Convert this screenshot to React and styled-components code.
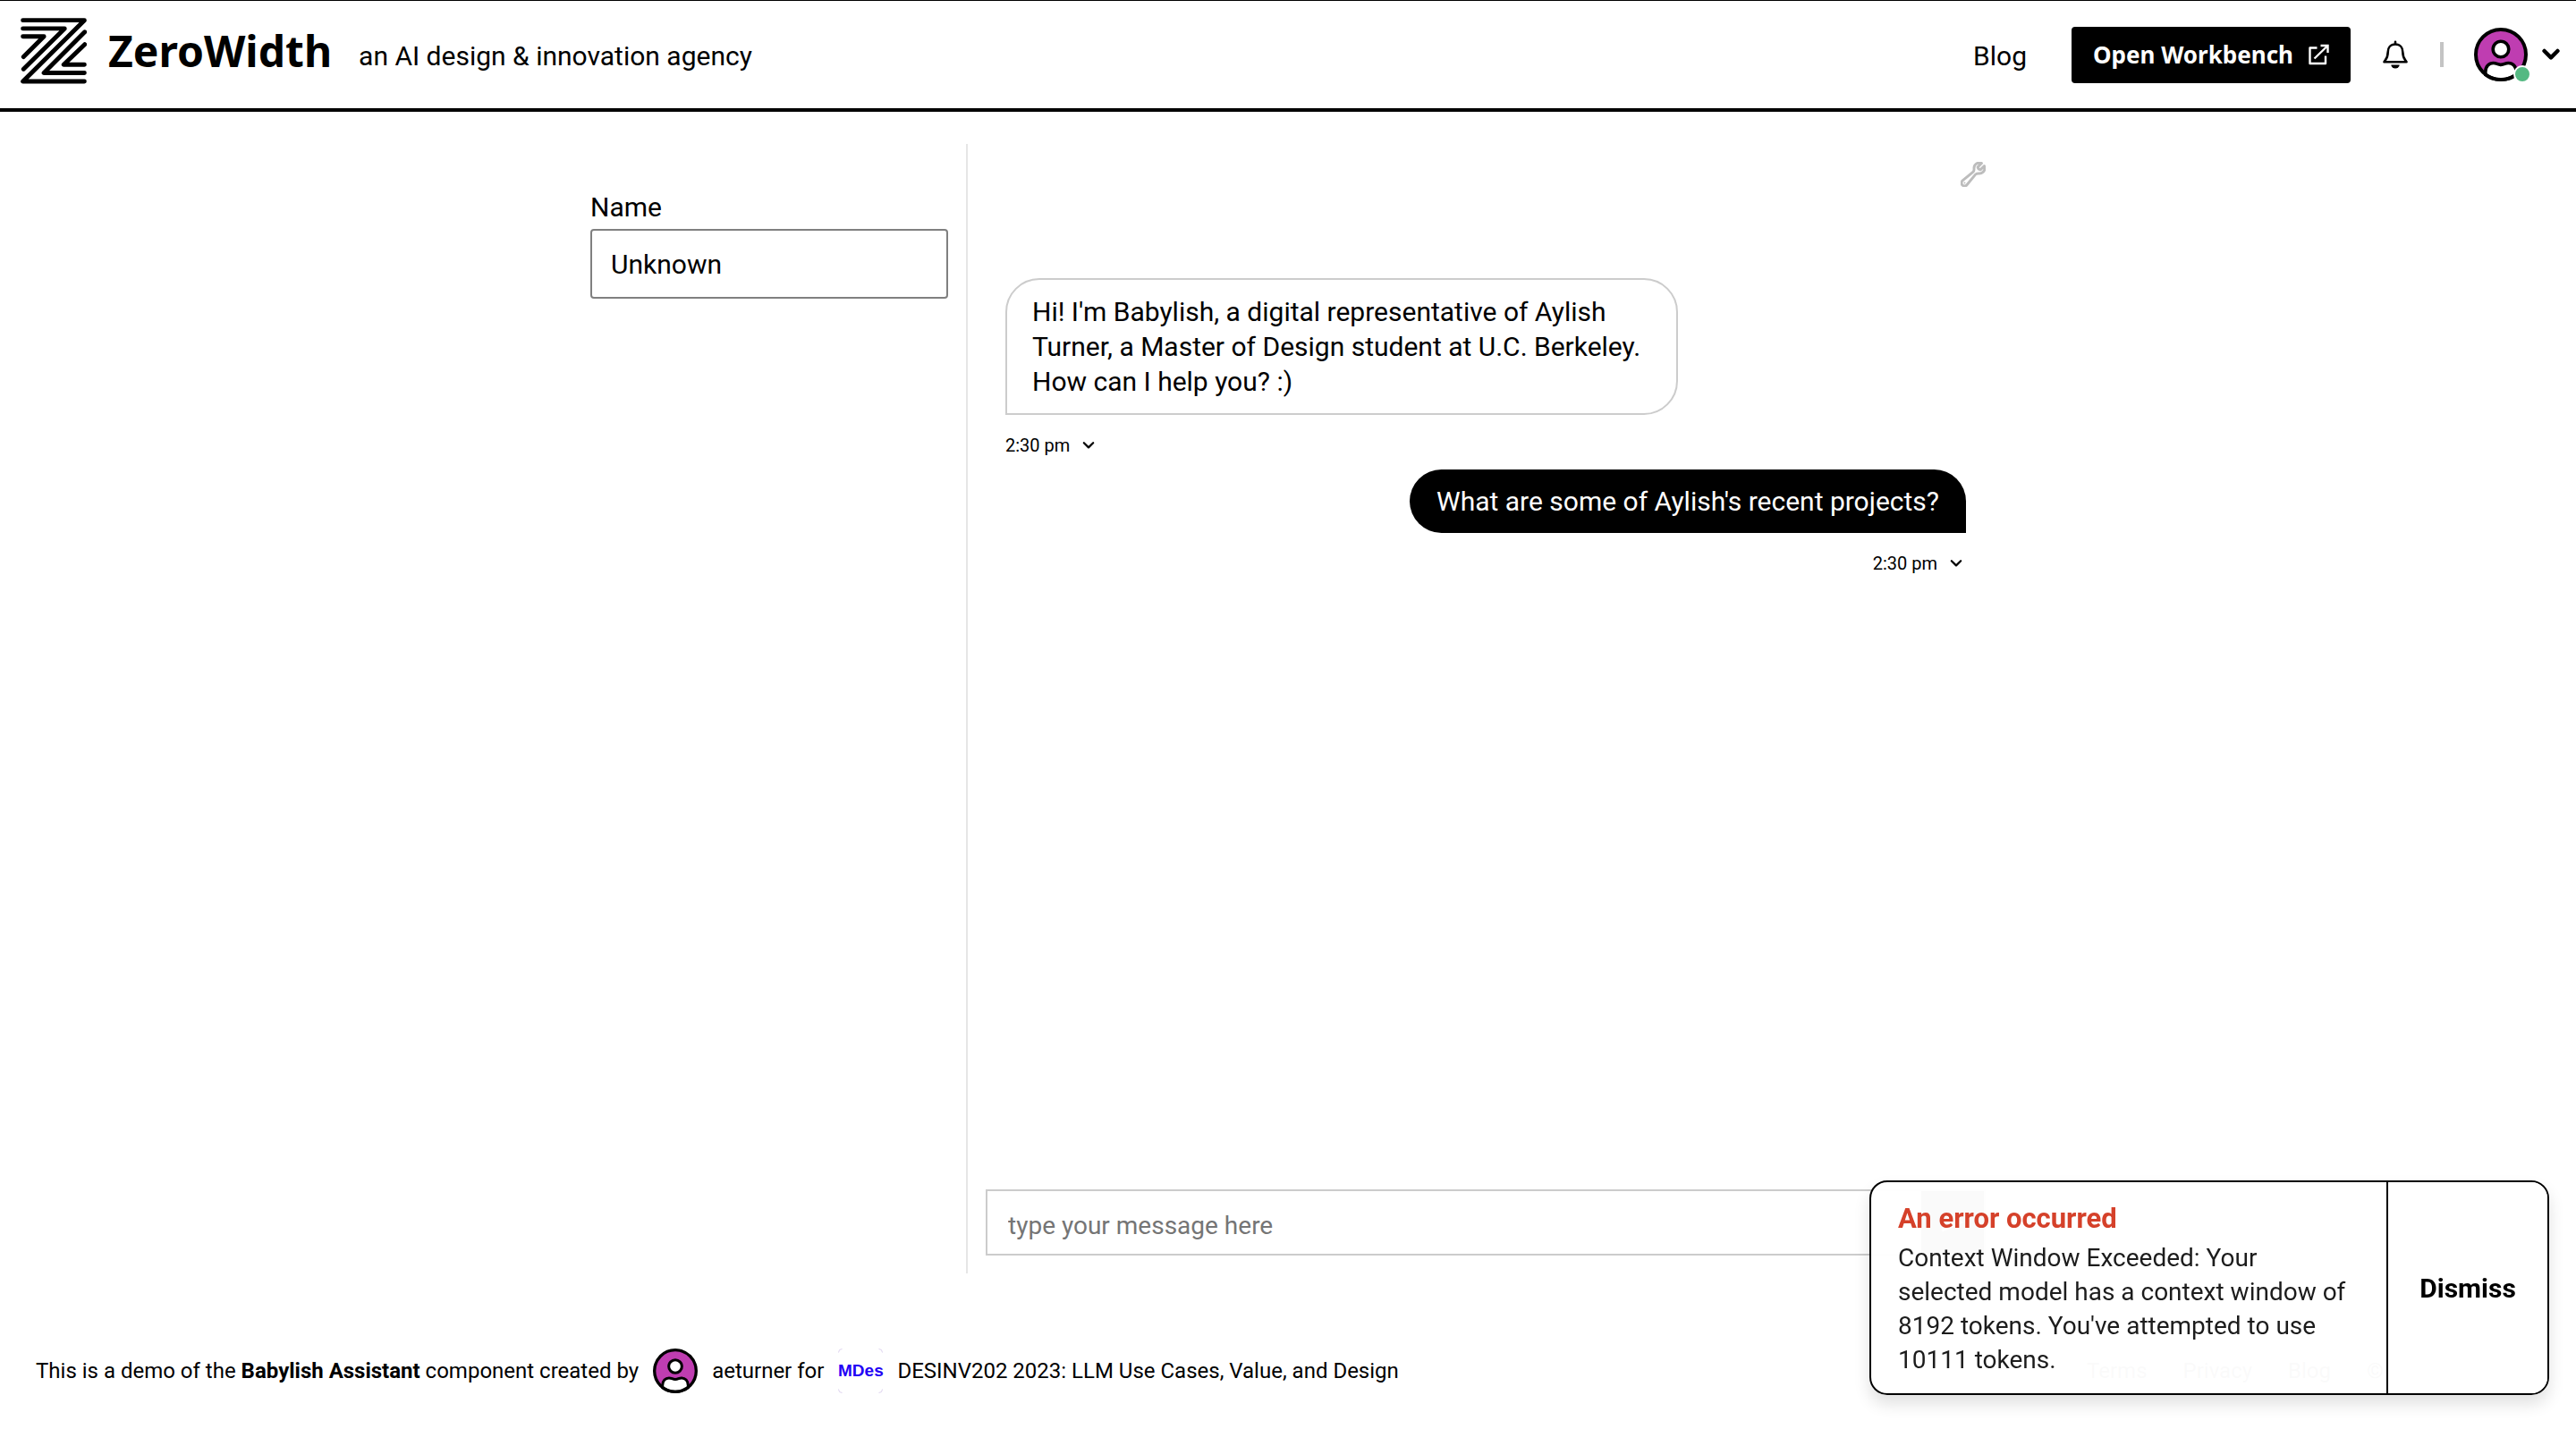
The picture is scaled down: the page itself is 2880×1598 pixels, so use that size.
import React, { useState } from "react";
import styled, { createGlobalStyle } from "styled-components";

const Global = createGlobalStyle`
  *, *::before, *::after { box-sizing: border-box; }
  body { margin: 0; background: #fff; color: #000; }
  body, button, input { font-family: Roboto, "Liberation Sans", sans-serif; }
  button { margin: 0; padding: 0; border: 0; background: none; color: inherit; cursor: pointer; }
  a { color: inherit; text-decoration: none; }
  svg { display: block; flex: none; }
`;

const Page = styled.div`
  display: flex;
  flex-direction: column;
  min-height: 100vh;
`;

const Header = styled.header`
  display: flex;
  align-items: center;
  justify-content: space-between;
  height: 125px;
  padding: 0 18px 0 23px;
  border-top: 1px solid #000;
  border-bottom: 4px solid #000;
`;

const Brand = styled.div`
  display: flex;
  align-items: center;
  gap: 30px;
`;

const BrandLink = styled.a`
  display: flex;
  align-items: center;
  gap: 24px;
  padding-bottom: 8px;
  font: 700 48px/64px "Noto Sans", "Open Sans", sans-serif;
`;

const NavText = styled.span`
  padding-top: 4px;
  font-size: 30px;
  line-height: 40px;
`;

const Actions = styled.nav`
  display: flex;
  align-items: center;
  gap: 34px;
`;

const NavLink = styled(NavText).attrs({ as: "a" })`
  margin-right: 16px;
`;

const WorkbenchButton = styled.button`
  display: flex;
  align-items: center;
  gap: 16px;
  height: 63px;
  padding: 0 24px;
  border-radius: 4px;
  background: #000;
  color: #fff;
  font: 700 26px/36px "Noto Sans", "Open Sans", sans-serif;
`;

const Divider = styled.span`
  width: 4px;
  height: 28px;
  background: #c4c4c4;
`;

const AccountButton = styled.button`
  display: flex;
  align-items: center;
  gap: 16px;
`;

const AvatarWrap = styled.span`
  position: relative;
`;

const StatusDot = styled.span`
  position: absolute;
  right: -4px;
  bottom: -2px;
  width: 20px;
  height: 20px;
  border: 2px solid #fff;
  border-radius: 50%;
  background: #54b982;
`;

const Main = styled.main`
  display: flex;
  flex: 1;
  width: 100%;
  max-width: 1600px;
  margin: 0 auto;
  padding: 36px 0 44px;
`;

const Sidebar = styled.aside`
  display: flex;
  flex-direction: column;
  gap: 4px;
  width: 442px;
  padding: 51px 20px 20px;
  border-right: 2px solid #e6e6e6;
`;

const FieldLabel = styled.label`
  font-size: 30px;
  line-height: 40px;
`;

const TextField = styled.input`
  width: 100%;
  height: 78px;
  padding: 2px 21px;
  border: 2px solid #808080;
  border-radius: 4px;
  background: #fff;
  color: #000;
  font-size: 30px;
`;

const Chat = styled.section`
  display: flex;
  flex: 1;
  flex-direction: column;
  min-width: 0;
  padding: 20px;
`;

const Toolbar = styled.div`
  display: flex;
  justify-content: flex-end;
  color: #bdbdbd;
`;

const Messages = styled.div`
  display: flex;
  flex: 1;
  flex-direction: column;
  padding: 102px 22px 0;
`;

const Message = styled.article`
  display: flex;
  flex-direction: column;
  align-items: ${(p) => (p.$own ? "flex-end" : "flex-start")};
`;

const Bubble = styled.p`
  max-width: 70%;
  margin: 0;
  padding: ${(p) => (p.$own ? "16px 30px" : "16px 28px")};
  border: ${(p) => (p.$own ? "0" : "2px solid #ccc")};
  border-radius: ${(p) => (p.$own ? "36px 36px 0 36px" : "38px 38px 38px 0")};
  background: ${(p) => (p.$own ? "#000" : "#fff")};
  color: ${(p) => (p.$own ? "#fff" : "#000")};
  font-size: 30px;
  line-height: 39px;
`;

const Stamp = styled.button`
  display: flex;
  align-items: center;
  gap: 14px;
  margin: 20px 4px 13px 0;
  font-size: 20px;
  line-height: 28px;
`;

const Composer = styled.form`
  display: flex;
  height: 74px;
  border: 2px solid #ccc;
`;

const MessageInput = styled.input`
  flex: 1;
  min-width: 0;
  padding: 6px 23px 0;
  border: 0;
  background: none;
  font-size: 28px;
  &::placeholder { color: #757575; opacity: 1; }
`;

const SendButton = styled.button`
  display: flex;
  align-items: center;
  justify-content: center;
  width: 70px;
  background: #000;
  color: #fff;
`;

const Footer = styled.footer`
  display: flex;
  align-items: center;
  justify-content: space-between;
  height: 130px;
  padding: 0 40px;
  font-size: 24px;
  line-height: 32px;
`;

const Credits = styled.div`
  display: flex;
  align-items: center;
  gap: 16px;
`;

const Program = styled.span`
  position: relative;
  display: flex;
  align-items: center;
  justify-content: center;
  width: 50px;
  height: 50px;
  color: #2200f5;
  font: 700 19px/24px "Liberation Sans", Arial, sans-serif;
`;

const Corners = styled.svg`
  position: absolute;
  inset: 0;
`;

const FooterLinks = styled.div`
  display: flex;
  gap: 40px;
`;

const Copyright = styled.span`
  min-width: 194px;
`;

const Toast = styled.div`
  position: fixed;
  right: 30px;
  bottom: 38px;
  display: flex;
  width: 760px;
  border: 2px solid #000;
  border-radius: 20px;
  background: rgba(255, 255, 255, 0.98);
  box-shadow: 0 10px 18px rgba(0, 0, 0, 0.12);
  overflow: hidden;
`;

const ToastBody = styled.div`
  flex: 1;
  padding: 20px 40px 18px 30px;
`;

const ToastTitle = styled.h2`
  margin: 0 0 4px;
  color: #d5412a;
  font-size: 31px;
  font-weight: 700;
  line-height: 42px;
`;

const ToastText = styled.p`
  margin: 0;
  color: #1c1c1c;
  font-size: 28px;
  line-height: 38px;
`;

const DismissButton = styled.button`
  width: 180px;
  border-left: 2px solid #000;
  background: #fff;
  font-size: 30px;
  font-weight: 700;
`;

const Logo = () => (
  <svg width="74" height="74" viewBox="68 59 224 224" fill="none" stroke="#000" strokeWidth="15" strokeLinecap="round" strokeLinejoin="round" aria-hidden="true">
    <path d="M76 67H284L76 274H284" />
    <path d="M76 95H217L78 232" />
    <path d="M76 122H147L78 191" />
    <path d="M285 107L147 245H284" />
    <path d="M285 149L214 217H284" />
  </svg>
);

const Avatar = ({ size }) => (
  <svg width={size} height={size} viewBox="0 0 60 60" stroke="#000" strokeWidth="3.6" aria-hidden="true">
    <circle cx="30" cy="30" r="28" fill="#bf3db1" stroke="none" />
    <path d="M12.8 52.5V49.5C12.8 43 17 39.5 21.5 39.5C25.5 39.5 26 41.4 30 41.4C34 41.4 34.5 39.5 38.5 39.5C43 39.5 47.2 43 47.2 49.5V52.5C42 56.5 36 58 30 58C24 58 18 56.5 12.8 52.5Z" fill="#fff" />
    <circle cx="30" cy="24" r="8.8" fill="#fff" />
    <circle cx="30" cy="30" r="28" fill="none" strokeWidth="4" />
  </svg>
);

const ExternalIcon = () => (
  <svg width="24" height="24" viewBox="0 0 24 24" fill="none" stroke="currentColor" strokeWidth="2.4" aria-hidden="true">
    <path d="M10.5 4.5H2.5V22H20V13.5" strokeLinejoin="round" />
    <path d="M7.5 16.5L22 2.5" />
    <path d="M14.5 2H22.5V10" />
  </svg>
);

const BellIcon = () => (
  <svg width="32" height="32" viewBox="0 0 32 32" aria-hidden="true">
    <path d="M16 4.5C10.6 4.5 7.7 8.5 7.7 13.2C7.7 19.5 5.8 20.8 3.5 24.3H28.5C26.2 20.8 24.3 19.5 24.3 13.2C24.3 8.5 21.4 4.5 16 4.5ZM16 1.8V4.5" fill="none" stroke="#000" strokeWidth="2.6" strokeLinecap="round" strokeLinejoin="round" />
    <path d="M11.3 27.5H20.7A4.7 4 0 0 1 11.3 27.5Z" />
  </svg>
);

const Chevron = ({ size, weight }) => (
  <svg width={size} height={size} viewBox="0 0 20 20" fill="none" stroke="currentColor" strokeWidth={weight} strokeLinecap="round" strokeLinejoin="round" aria-hidden="true">
    <path d="M2.6 6L10 13.4L17.4 6" />
  </svg>
);

const WrenchIcon = () => (
  <svg width="28" height="28" viewBox="1.5 1.5 21 21" fill="none" stroke="currentColor" strokeWidth="2.2" strokeLinecap="round" strokeLinejoin="round" aria-hidden="true">
    <path d="M21.75 6.75a4.5 4.5 0 0 1-4.884 4.484c-1.076-.091-2.264.071-2.95.904l-7.152 8.684a2.548 2.548 0 1 1-3.586-3.586l8.684-7.152c.833-.686.995-1.874.904-2.95a4.5 4.5 0 0 1 6.336-4.486l-3.276 3.276a3.004 3.004 0 0 0 2.25 2.25l3.276-3.276c.256.565.398 1.192.398 1.852Z" />
    <path d="M4.867 19.125h.008v.008h-.008Z" strokeWidth="1.4" />
  </svg>
);

const SendIcon = () => (
  <svg width="28" height="28" viewBox="0 0 24 24" fill="currentColor" aria-hidden="true">
    <path d="M2 21L23 12L2 3V10L17 12L2 14Z" />
  </svg>
);

const messages = [
  { text: "Hi! I'm Babylish, a digital representative of Aylish Turner, a Master of Design student at U.C. Berkeley. How can I help you? :)", time: "2:30 pm", own: false },
  { text: "What are some of Aylish's recent projects?", time: "2:30 pm", own: true },
];

export default function App() {
  const [name, setName] = useState("Unknown");
  const [draft, setDraft] = useState("");
  const [toastOpen, setToastOpen] = useState(true);

  return (
    <Page>
      <Global />
      <Header>
        <Brand>
          <BrandLink href="#">
            <Logo />
            ZeroWidth
          </BrandLink>
          <NavText>an AI design &amp; innovation agency</NavText>
        </Brand>
        <Actions>
          <NavLink href="#blog">Blog</NavLink>
          <WorkbenchButton type="button">
            Open Workbench
            <ExternalIcon />
          </WorkbenchButton>
          <button type="button" aria-label="Notifications">
            <BellIcon />
          </button>
          <Divider />
          <AccountButton type="button" aria-label="Account">
            <AvatarWrap>
              <Avatar size={60} />
              <StatusDot />
            </AvatarWrap>
            <Chevron size={20} weight={4.5} />
          </AccountButton>
        </Actions>
      </Header>

      <Main>
        <Sidebar>
          <FieldLabel htmlFor="name">Name</FieldLabel>
          <TextField id="name" value={name} onChange={(e) => setName(e.target.value)} />
        </Sidebar>
        <Chat>
          <Toolbar>
            <button type="button" aria-label="Settings">
              <WrenchIcon />
            </button>
          </Toolbar>
          <Messages>
            {messages.map((m) => (
              <Message key={m.text} $own={m.own}>
                <Bubble $own={m.own}>{m.text}</Bubble>
                <Stamp type="button">
                  {m.time}
                  <Chevron size={14} weight={3.2} />
                </Stamp>
              </Message>
            ))}
          </Messages>
          <Composer onSubmit={(e) => e.preventDefault()}>
            <MessageInput
              aria-label="Message"
              placeholder="type your message here"
              value={draft}
              onChange={(e) => setDraft(e.target.value)}
            />
            <SendButton type="submit" aria-label="Send">
              <SendIcon />
            </SendButton>
          </Composer>
        </Chat>
      </Main>

      <Footer>
        <Credits>
          <span>
            This is a demo of the <b>Babylish Assistant</b> component created by
          </span>
          <Avatar size={50} />
          <span>
            <a href="#aeturner">aeturner</a> for
          </span>
          <Program>
            <Corners width="50" height="50" viewBox="0 0 50 50" fill="none" stroke="#ddd3ee" aria-hidden="true">
              <path d="M.5 4.5Q.5 .5 4.5 .5M45.5 .5Q49.5 .5 49.5 4.5M49.5 45.5Q49.5 49.5 45.5 49.5M4.5 49.5Q.5 49.5 .5 45.5" />
            </Corners>
            MDes
          </Program>
          <span>DESINV202 2023: LLM Use Cases, Value, and Design</span>
        </Credits>
        <FooterLinks>
          <a href="#terms">Terms</a>
          <a href="#privacy">Privacy</a>
          <a href="#blog">Blog</a>
          <Copyright>©</Copyright>
        </FooterLinks>
      </Footer>

      {toastOpen && (
        <Toast role="alert">
          <ToastBody>
            <ToastTitle>An error occurred</ToastTitle>
            <ToastText>
              Context Window Exceeded: Your selected model has a context window of 8192 tokens. You've attempted to use 10111 tokens.
            </ToastText>
          </ToastBody>
          <DismissButton type="button" onClick={() => setToastOpen(false)}>
            Dismiss
          </DismissButton>
        </Toast>
      )}
    </Page>
  );
}
